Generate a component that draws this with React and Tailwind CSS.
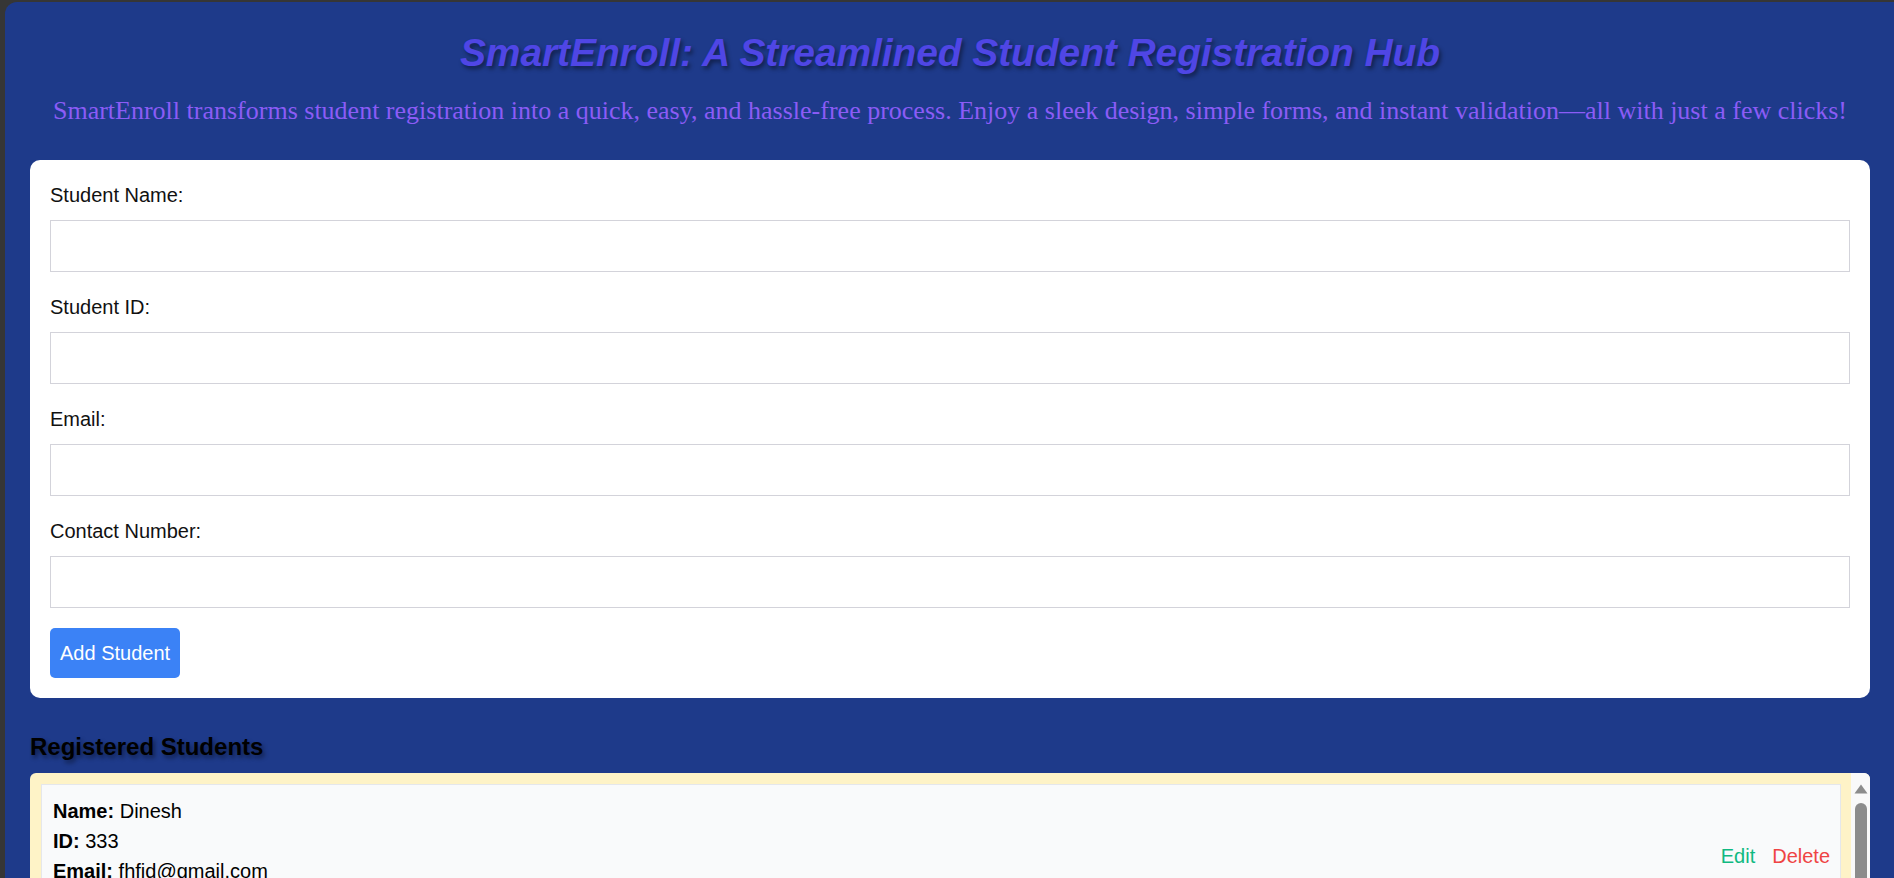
import React from "react";

const fields = [
  { label: "Student Name:", type: "text" },
  { label: "Student ID:", type: "text" },
  { label: "Email:", type: "email" },
  { label: "Contact Number:", type: "tel" },
];

const students = [
  { name: "Dinesh", id: "333", email: "fhfjd@gmail.com", contact: "9876543210" },
  { name: "Ravi", id: "334", email: "ravi@gmail.com", contact: "9123456780" },
];

export default function App() {
  return (
    <div className="h-screen overflow-hidden bg-[#363636] pl-[5px] pt-[2px] font-['Liberation_Sans',Arial,sans-serif]">
      <div className="h-full rounded-tl-[12px] bg-[#1e3a8a] pl-[25px] pr-[24px] pt-[29px]">
        <h1 className="text-center text-[39px] leading-[44px] font-bold italic tracking-[-0.1px] text-[#4f46e5] [text-shadow:2px_3px_4px_rgba(0,0,0,0.45)]">
          SmartEnroll: A Streamlined Student Registration Hub
        </h1>
        <p className="mt-[20px] text-center font-['Liberation_Serif',Georgia,serif] text-[26px] leading-[32px] text-[#8b5cf6]">
          SmartEnroll transforms student registration into a quick, easy, and hassle-free process. Enjoy a sleek design, simple forms, and instant validation—all with just a few clicks!
        </p>

        <form
          className="mt-[33px] rounded-[10px] bg-white px-[20px] pt-[21px] pb-[20px]"
          onSubmit={(e) => e.preventDefault()}
        >
          {fields.map((f) => (
            <div key={f.label} className="mb-[21px]">
              <label className="mb-[11px] block text-[20px] leading-[28px] text-[#111]">{f.label}</label>
              <input
                type={f.type}
                className="block h-[52px] w-full border border-[#d3d3da] bg-white px-[10px] text-[20px] outline-none"
              />
            </div>
          ))}
          <button
            type="submit"
            className="-mt-[1px] h-[50px] rounded-[5px] bg-[#3b82f6] px-[10px] text-[20px] leading-[28px] text-white"
          >
            Add Student
          </button>
        </form>

        <h2 className="mt-[34px] text-[24px] leading-[30px] font-bold text-black [text-shadow:2px_3px_4px_rgba(0,0,0,0.45)]">
          Registered Students
        </h2>

        <div className="mt-[11px] flex max-h-[300px] overflow-hidden rounded-[6px] bg-[#fef3c7]">
          <div className="min-w-0 flex-1 py-[11px] pl-[11px] pr-[10px]">
            {students.map((s) => (
              <div
                key={s.id}
                className="mb-[10px] flex items-center justify-between border border-[#e5e7eb] bg-[#f9fafb] py-[11px] pl-[11px] pr-[10px] text-[20px] leading-[30px] text-black"
              >
                <div>
                  <div><span className="font-bold">Name:</span> {s.name}</div>
                  <div><span className="font-bold">ID:</span> {s.id}</div>
                  <div><span className="font-bold">Email:</span> {s.email}</div>
                  <div><span className="font-bold">Contact:</span> {s.contact}</div>
                </div>
                <div className="flex gap-[17px]">
                  <button className="text-[#10b981]">Edit</button>
                  <button className="text-[#ef4444]">Delete</button>
                </div>
              </div>
            ))}
          </div>
          <div className="flex w-[19px] shrink-0 flex-col items-center bg-[#f9f9f9] pt-[11px]">
            <svg width="14" height="10" viewBox="0 0 14 10" className="block">
              <path d="M7 0.5 L13.5 9.5 L0.5 9.5 Z" fill="#8c8c8c" />
            </svg>
            <div className="mt-[9px] ml-[1px] h-[220px] w-[12px] rounded-full bg-[#8c8c8c]" />
          </div>
        </div>
      </div>
    </div>
  );
}
